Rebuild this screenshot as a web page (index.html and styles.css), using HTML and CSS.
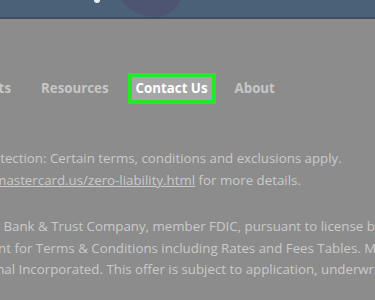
FILE: index.html
```html
<!DOCTYPE html>
<html lang="en">
<head>
    <meta charset="UTF-8">
    <meta name="viewport" content="width=device-width, initial-scale=1.0">
    <title>Contact Us</title>
    <link rel="stylesheet" href="styles.css">
</head>
<body>
    <div class="hero">
        <span class="hero-dot"></span>
        <span class="hero-shape"></span>
    </div>

    <nav class="nav">
        <a class="nav-link first">Products</a>
        <a class="nav-link">Resources</a>
        <a class="nav-link active">Contact Us</a>
        <a class="nav-link">About</a>
    </nav>

    <div class="legal">
        <p>
            <span class="line l1">Zero Liability Protection: Certain terms, conditions and exclusions apply.</span>
            <span class="line l2">See <u>www.mastercard.us/zero-liability.html</u> for more details.</span>
        </p>
        <p>
            <span class="line l3">issued by The Bancorp Bank &amp; Trust Company, member FDIC, pursuant to license by Mastercard</span>
            <span class="line l4">Cardholder Agreement for Terms &amp; Conditions including Rates and Fees Tables. Mastercard</span>
            <span class="line l5">International Incorporated. This offer is subject to application, underwriting</span>
        </p>
    </div>
</body>
</html>
```

FILE: styles.css
```css
body {
    margin: 0;
    background: #8c8c8c;
    font-family: "Open Sans", sans-serif;
    overflow: hidden;
    height: 300px;
}
.hero {
    position: relative;
    height: 17px;
    background: #4a6178;
    border-bottom: 2px solid #3e4e60;
    overflow: hidden;
}
.hero-dot {
    position: absolute;
    left: 94px;
    top: -3px;
    width: 6px;
    height: 6px;
    border-radius: 50%;
    background: #e8eef5;
}
.hero-shape {
    position: absolute;
    left: 112px;
    top: -30px;
    width: 70px;
    height: 47px;
    border-radius: 0 0 30px 50px;
    background: #4d5572;
}
.nav {
    display: flex;
    align-items: center;
    gap: 19px;
    margin: 54px 0 0 -52px;
    font-size: 13.3px;
    font-weight: 700;
    color: #c6c6c6;
}
.nav-link {
    padding: 2px 4px;
    line-height: 19px;
}
.nav-link.first {
    margin-right: 3px;
}
.nav-link.active {
    color: #fff;
    background: #a6a6a6;
    border: 4px solid #26e826;
    margin: 0 -4px;
}
.legal {
    margin-top: 44px;
    font-size: 13.3px;
    color: #cacaca;
}
.legal p {
    margin: 0 0 25px;
}
.line {
    display: block;
    white-space: nowrap;
    line-height: 21.5px;
}
.l1 { margin-left: -104px; }
.l2 { margin-left: -66px; }
.l3 { margin-left: -140px; }
.l4 { margin-left: -131px; }
.l5 { margin-left: -65px; }
```
